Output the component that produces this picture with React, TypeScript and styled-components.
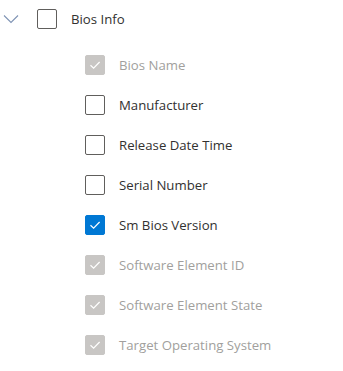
import React from "react";
import styled, { createGlobalStyle } from "styled-components";

const GlobalStyle = createGlobalStyle`
  html, body {
    margin: 0;
    padding: 0;
    background: #ffffff;
  }
  body {
    font-family: "Open Sans", "Noto Sans", "Liberation Sans", sans-serif;
  }
`;

const Tree = styled.div`
  display: flex;
  flex-direction: column;
  width: 343px;
`;

const Row = styled.div<{ $indent: number; $height: number }>`
  display: flex;
  align-items: center;
  height: ${(p) => p.$height}px;
  padding-left: ${(p) => p.$indent}px;
`;

const Children = styled.div`
  display: flex;
  flex-direction: column;
  margin-top: 7px;
`;

const Chevron = styled.span`
  display: flex;
  align-items: center;
  justify-content: center;
  width: 22px;
  height: 22px;
  margin-right: 15px;
`;

const Box = styled.span<{ $state: "off" | "on" | "disabled" }>`
  box-sizing: border-box;
  display: flex;
  align-items: center;
  justify-content: center;
  width: 20px;
  height: 20px;
  border-radius: 2px;
  border: 1px solid
    ${(p) =>
      p.$state === "on" ? "#0078d4" : p.$state === "disabled" ? "#c8c6c4" : "#605e5c"};
  background: ${(p) =>
    p.$state === "on" ? "#0078d4" : p.$state === "disabled" ? "#c8c6c4" : "#ffffff"};
  margin-right: 14px;
`;

const Label = styled.span<{ $disabled?: boolean }>`
  font-size: 13.2px;
  color: ${(p) => (p.$disabled ? "#a19f9d" : "#323130")};
  white-space: nowrap;
`;

const Check = () => (
  <svg width="14" height="14" viewBox="0 0 14 14" fill="none">
    <path d="M2.5 7.2 L5.6 10.2 L11.6 4" stroke="#ffffff" strokeWidth="1.2" />
  </svg>
);

type Item = { label: string; state: "off" | "on" | "disabled" };

const items: Item[] = [
  { label: "Bios Name", state: "disabled" },
  { label: "Manufacturer", state: "off" },
  { label: "Release Date Time", state: "off" },
  { label: "Serial Number", state: "off" },
  { label: "Sm Bios Version", state: "on" },
  { label: "Software Element ID", state: "disabled" },
  { label: "Software Element State", state: "disabled" },
  { label: "Target Operating System", state: "disabled" },
];

export default function App() {
  return (
    <>
      <GlobalStyle />
      <Tree>
        <Row $indent={0} $height={38}>
          <Chevron>
            <svg width="16" height="10" viewBox="0 0 16 10" fill="none">
              <path d="M1 1.5 L8 8.5 L15 1.5" stroke="#7f93b4" strokeWidth="1.1" />
            </svg>
          </Chevron>
          <Box $state="off" />
          <Label>Bios Info</Label>
        </Row>
        <Children>
          {items.map((it) => (
            <Row key={it.label} $indent={85} $height={40}>
              <Box $state={it.state}>{it.state !== "off" && <Check />}</Box>
              <Label $disabled={it.state === "disabled"}>{it.label}</Label>
            </Row>
          ))}
        </Children>
      </Tree>
    </>
  );
}
